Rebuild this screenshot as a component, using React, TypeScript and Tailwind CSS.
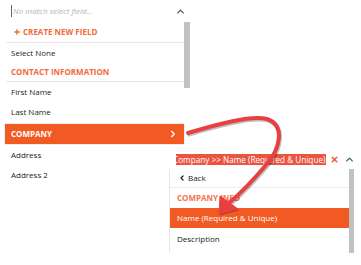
import { ChevronUp, ChevronRight, ChevronLeft, Plus, X } from "lucide-react";

const orange = "bg-[#f15a22]";

function Row({ children, className = "" }: { children: React.ReactNode; className?: string }) {
  return (
    <div className={`flex items-center pl-[5px] text-[8px] text-[#222] ${className}`}>
      {children}
    </div>
  );
}

export default function App() {
  return (
    <div className="relative flex w-[361px] h-[265px] overflow-hidden bg-white font-['Open_Sans',sans-serif]">
      {/* Left dropdown */}
      <div className="w-[190px] shrink-0">
        <div className="flex h-[22px] items-center pl-[11px] pr-[4px]">
          <span className="h-[12px] w-px bg-[#666]" />
          <span className="ml-px text-[8px] italic text-[#b4b4b4]">No match select field...</span>
          <ChevronUp className="ml-auto h-[11px] w-[11px] text-[#555]" strokeWidth={3} />
        </div>
        <div className="ml-[6px] flex">
          <div className="w-[178px]">
            <div className="flex h-[21px] items-center gap-[2px] border-b border-[#e6e6e6] pl-[7px] text-[8px] font-bold text-[#f26a3a]">
              <Plus className="h-[8px] w-[8px]" strokeWidth={4} />
              CREATE NEW FIELD
            </div>
            <Row className="h-[20px]">Select None</Row>
            <Row className="h-[19px] border-b border-[#e6e6e6] font-bold !text-[#f26a3a]">CONTACT INFORMATION</Row>
            <Row className="h-[20px]">First Name</Row>
            <Row className="h-[20px]">Last Name</Row>
            <div className={`-ml-px mt-[2px] flex h-[20px] items-center pl-[6px] pr-[6px] text-[8px] font-bold text-white ${orange} shadow-[0_0_1px_rgba(0,0,0,0.4)]`}>
              COMPANY
              <ChevronRight className="ml-auto h-[10px] w-[10px]" strokeWidth={3.5} />
            </div>
            <Row className="h-[21px]">Address</Row>
            <Row className="h-[20px]">Address 2</Row>
          </div>
          <div className="h-[66px] w-[6px] bg-[#c1c1c1]" />
        </div>
      </div>

      {/* Right dropdown */}
      <div className="-ml-[21px] mt-[150px] w-[187px] shrink-0">
        <div className="flex h-[19px] items-center pl-[7px]">
          <div className="w-[150px] shrink-0 overflow-hidden">
            <span className="-ml-[4px] block w-max whitespace-nowrap bg-[#ea5440] px-px text-[8.2px] leading-[11px] text-white">
              Company &gt;&gt; Name (Required &amp; Unique)
            </span>
          </div>
          <X className="ml-[4px] h-[9px] w-[9px] shrink-0 text-[#f15a22]" strokeWidth={4} />
          <ChevronUp className="ml-[5px] h-[11px] w-[11px] shrink-0 text-[#555]" strokeWidth={3} />
        </div>
        <div className="flex h-[84px] border-l border-[#e6e6e6]">
          <div className="w-[179px]">
            <div className="flex h-[19px] items-center gap-[2px] border-b border-[#ececec] pl-[8px] text-[8px] text-[#222]">
              <ChevronLeft className="h-[8px] w-[8px] text-[#222]" strokeWidth={4} />
              Back
            </div>
            <div className="flex h-[20px] items-center pl-[7px] text-[8px] font-bold text-[#f47550]">COMPANY INFO</div>
            <div className={`flex h-[20px] items-center pl-[7px] text-[8px] text-white ${orange}`}>
              Name (Required &amp; Unique)
            </div>
            <div className="flex h-[22px] items-center pl-[7px] text-[8px] text-[#222]">Description</div>
          </div>
          <div className="h-[84px] w-[5px] bg-[#c1c1c1]" />
        </div>
      </div>

      {/* Annotation arrow */}
      <svg className="pointer-events-none absolute inset-0" width="361" height="265" viewBox="0 0 361 265">
        <g transform="translate(1,1.5)" opacity="0.25">
          <path d="M188 133 C 215 125, 250 115, 267 119 C 285 125, 281 148, 266 165 C 255 178, 242 192, 229 203" fill="none" stroke="#000" strokeWidth="4" strokeLinecap="round" />
          <polygon points="219,214 220,196 238,209" fill="#000" />
        </g>
        <path d="M188 133 C 215 125, 250 115, 267 119 C 285 125, 281 148, 266 165 C 255 178, 242 192, 229 203" fill="none" stroke="#e8403f" strokeWidth="4" strokeLinecap="round" />
        <polygon points="219,214 220,196 238,209" fill="#e8403f" strokeLinejoin="round" stroke="#e8403f" strokeWidth="1" />
      </svg>
    </div>
  );
}
